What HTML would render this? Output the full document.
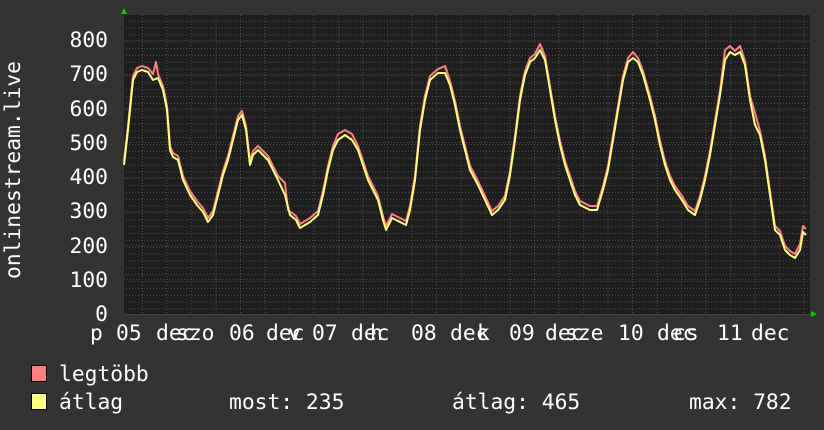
<!DOCTYPE html>
<html><head><meta charset="utf-8"><style>
html,body{margin:0;padding:0;background:#333333;}
svg{display:block;}
text{font-family:"DejaVu Sans Mono","Liberation Mono",monospace;font-size:21.3px;fill:#ffffff;}
</style></head><body>
<svg width="824" height="430" viewBox="0 0 824 430" xmlns="http://www.w3.org/2000/svg">
<defs>
<pattern id="hg" x="0" y="0.1" width="824" height="6.85" patternUnits="userSpaceOnUse">
<line x1="0" y1="0.5" x2="824" y2="0.5" stroke="#505050" stroke-width="1" stroke-dasharray="1,2"/>
</pattern>
<pattern id="vg" x="142" y="0" width="24.5" height="430" patternUnits="userSpaceOnUse">
<line x1="0.5" y1="0" x2="0.5" y2="430" stroke="#505050" stroke-width="1" stroke-dasharray="1,2"/>
</pattern>
</defs>
<rect x="0" y="0" width="824" height="430" fill="#333333"/>
<rect x="124" y="15" width="686" height="299" fill="#1e1e1e"/>
<rect x="124" y="15" width="686" height="299" fill="url(#hg)"/>
<rect x="124" y="15" width="686" height="299" fill="url(#vg)"/>
<g stroke="#6a3434" stroke-width="1" stroke-dasharray="1,2">
<line x1="124" y1="279.5" x2="810" y2="279.5"/>
<line x1="124" y1="245.5" x2="810" y2="245.5"/>
<line x1="124" y1="211.5" x2="810" y2="211.5"/>
<line x1="124" y1="177.5" x2="810" y2="177.5"/>
<line x1="124" y1="142.5" x2="810" y2="142.5"/>
<line x1="124" y1="108.5" x2="810" y2="108.5"/>
<line x1="124" y1="74.5" x2="810" y2="74.5"/>
<line x1="124" y1="40.5" x2="810" y2="40.5"/>
<line x1="191.5" y1="15" x2="191.5" y2="314"/>
<line x1="289.5" y1="15" x2="289.5" y2="314"/>
<line x1="387.5" y1="15" x2="387.5" y2="314"/>
<line x1="485.5" y1="15" x2="485.5" y2="314"/>
<line x1="583.5" y1="15" x2="583.5" y2="314"/>
<line x1="681.5" y1="15" x2="681.5" y2="314"/>
<line x1="779.5" y1="15" x2="779.5" y2="314"/>
</g>
<line x1="124" y1="314.5" x2="812" y2="314.5" stroke="#444" stroke-width="1"/>
<polygon points="121,14 124,8 127,14" fill="#00cc00"/>
<polygon points="811,311 817,314 811,317" fill="#00cc00"/>
<polyline fill="none" stroke="#ff8080" stroke-width="2" stroke-linejoin="round" points="124,161 128,126 133,76 137,68 142,66 148,68 153,74 156,62 158,74 163,86 167,106 170,146 173,153 178,156 183,176 190,191 197,201 203,208 208,218 213,211 218,191 223,171 228,156 233,136 238,116 242,111 246,126 250,161 253,151 258,146 263,151 268,156 273,166 278,176 285,183 288,210 296,216 300,224 310,218 318,211 323,191 328,166 333,146 338,134 345,130 352,134 358,146 363,161 368,176 373,186 378,196 383,216 386,226 392,214 400,218 406,221 410,206 415,176 420,126 425,96 430,76 438,69 445,66 450,81 455,101 460,126 465,146 470,166 478,181 485,196 492,211 498,206 505,196 510,171 515,136 520,96 525,71 530,58 535,54 540,44 545,56 550,86 555,116 560,141 565,161 570,176 575,191 580,201 590,206 597,206 603,186 608,166 613,136 618,106 623,76 628,58 633,52 638,58 643,71 650,96 655,116 660,141 665,161 670,176 675,186 682,196 688,206 695,211 700,196 705,176 710,151 715,121 720,91 725,50 730,46 735,51 740,46 745,61 750,96 755,113 760,131 765,156 770,191 775,226 780,231 785,246 790,251 795,254 800,244 803,226 806,229"/>
<polyline fill="none" stroke="#ffff80" stroke-width="2" stroke-linejoin="round" points="124,165 128,130 133,80 137,72 142,70 148,72 153,80 158,78 163,90 167,110 170,150 173,157 178,160 183,180 190,195 197,205 203,212 208,222 213,215 218,195 223,175 228,160 233,140 238,120 242,115 246,130 250,165 253,155 258,150 263,155 268,160 273,170 278,180 285,195 290,215 296,220 300,228 310,222 318,215 323,195 328,170 333,150 338,140 345,135 352,140 358,150 363,165 368,180 373,190 378,200 383,220 386,230 392,218 400,222 406,225 410,210 415,180 420,130 425,100 430,80 438,73 445,73 450,85 455,105 460,130 465,150 470,170 478,185 485,200 492,215 498,210 505,200 510,175 515,140 520,100 525,75 530,62 535,58 540,50 545,60 550,90 555,120 560,145 565,165 570,180 575,195 580,205 590,210 597,210 603,190 608,170 613,140 618,110 623,80 628,62 633,58 638,62 643,75 650,100 655,120 660,145 665,165 670,180 675,190 682,200 688,210 695,215 700,200 705,180 710,155 715,125 720,95 725,60 730,52 735,55 740,52 745,65 750,100 755,125 760,135 765,160 770,195 775,230 780,235 785,250 790,255 795,258 800,250 803,232 806,235"/>
<g text-anchor="end">
<text x="108" y="321">0</text>
<text x="108" y="287">100</text>
<text x="108" y="253">200</text>
<text x="108" y="218">300</text>
<text x="108" y="184">400</text>
<text x="108" y="150">500</text>
<text x="108" y="116">600</text>
<text x="108" y="81">700</text>
<text x="108" y="47">800</text>
</g>
<text transform="translate(20,170) rotate(-90)" text-anchor="middle">onlinestream.live</text>
<text x="90" y="340">p</text><text x="116" y="340">05</text><text x="156" y="340">dec</text><text x="176" y="340">szo</text>
<text x="229" y="340">06</text><text x="266" y="340">dec</text><text x="288" y="340">v</text>
<text x="312" y="340">07</text><text x="351" y="340">dec</text><text x="370" y="340">h</text>
<text x="411" y="340">08</text><text x="450" y="340">dec</text><text x="477" y="340">k</text>
<text x="509" y="340">09</text><text x="545" y="340">dec</text><text x="565" y="340">sze</text>
<text x="618" y="340">10</text><text x="657" y="340">dec</text><text x="673" y="340">cs</text>
<text x="717" y="340">11</text><text x="751" y="340">dec</text>
<rect x="31.5" y="365.5" width="15" height="16" fill="#ff8080" stroke="#000" stroke-width="1"/>
<rect x="31.5" y="393.5" width="15" height="16" fill="#ffff80" stroke="#000" stroke-width="1"/>
<text x="59" y="381">legtöbb</text>
<text x="59" y="409">átlag</text>
<text x="229" y="409">most: 235</text>
<text x="452" y="409">átlag: 465</text>
<text x="689" y="409">max: 782</text>
</svg>
</body></html>
